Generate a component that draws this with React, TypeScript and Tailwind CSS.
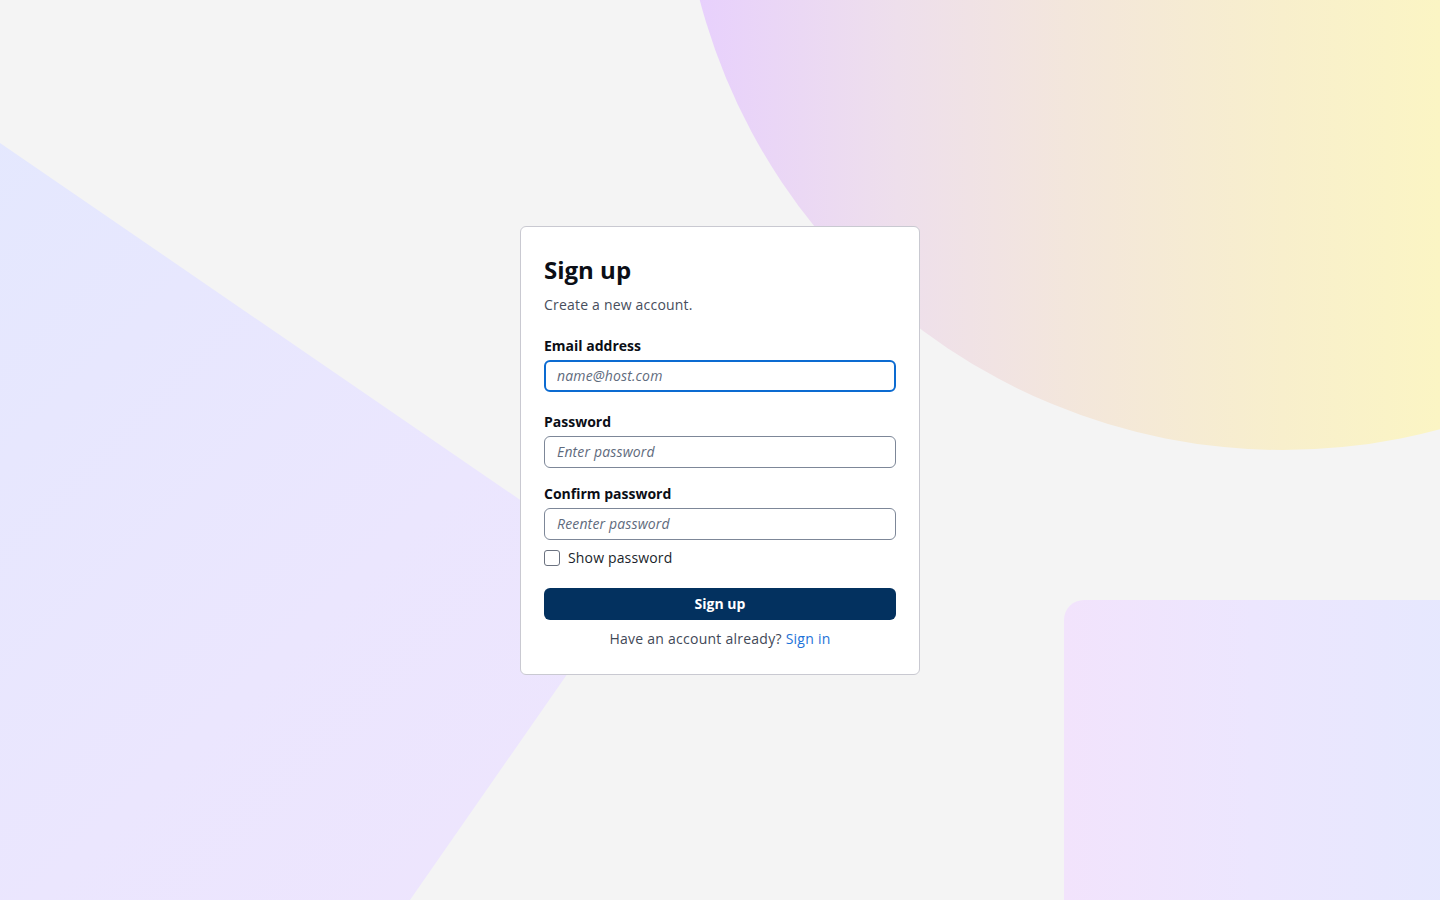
import { useState } from "react"

export default function App() {
  const [show, setShow] = useState(false)

  return (
    <div className="relative h-[900px] w-full overflow-hidden bg-[#f4f4f4] font-['Open_Sans',sans-serif]">
      {/* decorative background shapes */}
      <div className="pointer-events-none absolute left-[680px] top-[-756px] h-[1206px] w-[1206px] rounded-full bg-[linear-gradient(90deg,#e7cffe_0%,#eedfec_18%,#f3e6dc_32%,#f8efcc_50%,#fbf5c4_63%,#fbf5c4_100%)]" />
      <div className="pointer-events-none absolute inset-0 bg-[linear-gradient(135deg,#e3e8fe_0%,#ebe6fe_40%,#f3e2fc_100%)] [clip-path:polygon(0px_143px,634px_578px,410px_900px,0px_900px)]" />
      <div className="pointer-events-none absolute left-[1064px] top-[600px] h-[340px] w-[420px] rounded-[20px] bg-[linear-gradient(90deg,#f2e3fc_0%,#ece6fe_45%,#e5e8fe_100%)]" />

      <div className="relative flex h-full items-center justify-center">
        <div className="w-[400px] rounded-md border border-[#c9c9d1] bg-white px-[23px] pt-[23px] pb-[25px]">
          <h1 className="text-2xl font-bold leading-10 text-[#0b0e16]">Sign up</h1>
          <p className="mt-[5px] text-sm leading-5 tracking-[0.2px] text-[#474e5c]">Create a new account.</p>

          <form className="mt-[21px]" onSubmit={(e) => e.preventDefault()}>
            <div className="mb-5">
              <label className="mb-1 block text-sm font-bold leading-5 text-[#0b0e16]">Email address</label>
              <input
                type="email"
                placeholder="name@host.com"
                className="block h-8 w-full rounded-md border-2 border-[#0c6bd1] bg-white px-[11px] pb-px text-sm tracking-[0.15px] text-[#1a1f2b] outline-none placeholder:italic placeholder:text-[#5f6b7d]"
              />
            </div>

            <div className="mb-4">
              <label className="mb-1 block text-sm font-bold leading-5 text-[#0b0e16]">Password</label>
              <input
                type={show ? "text" : "password"}
                placeholder="Enter password"
                className="block h-8 w-full rounded-md border border-[#7d8798] bg-white px-3 pb-px text-sm tracking-[0.15px] text-[#1a1f2b] outline-none placeholder:italic placeholder:text-[#5f6b7d]"
              />
            </div>

            <div>
              <label className="mb-1 block text-sm font-bold leading-5 text-[#0b0e16]">Confirm password</label>
              <input
                type={show ? "text" : "password"}
                placeholder="Reenter password"
                className="block h-8 w-full rounded-md border border-[#7d8798] bg-white px-3 pb-px text-sm tracking-[0.15px] text-[#1a1f2b] outline-none placeholder:italic placeholder:text-[#5f6b7d]"
              />
            </div>

            <label className="mt-2 flex h-5 items-center gap-2 text-sm leading-5 tracking-[0.15px] text-[#1a1f2b]">
              <input
                type="checkbox"
                checked={show}
                onChange={(e) => setShow(e.target.checked)}
                className="h-4 w-4 appearance-none rounded-[3px] border border-[#6b7280] bg-white checked:bg-[#0c6bd1]"
              />
              Show password
            </label>

            <button
              type="submit"
              className="mt-5 block h-8 w-full rounded-md bg-[#03315f] text-sm font-bold text-white"
            >
              Sign up
            </button>

            <p className="mt-[9px] text-center text-sm leading-5 tracking-[0.25px] text-[#3f4857]">
              Have an account already?{" "}
              <a href="#" className="text-[#1d72d8]">
                Sign in
              </a>
            </p>
          </form>
        </div>
      </div>
    </div>
  )
}
